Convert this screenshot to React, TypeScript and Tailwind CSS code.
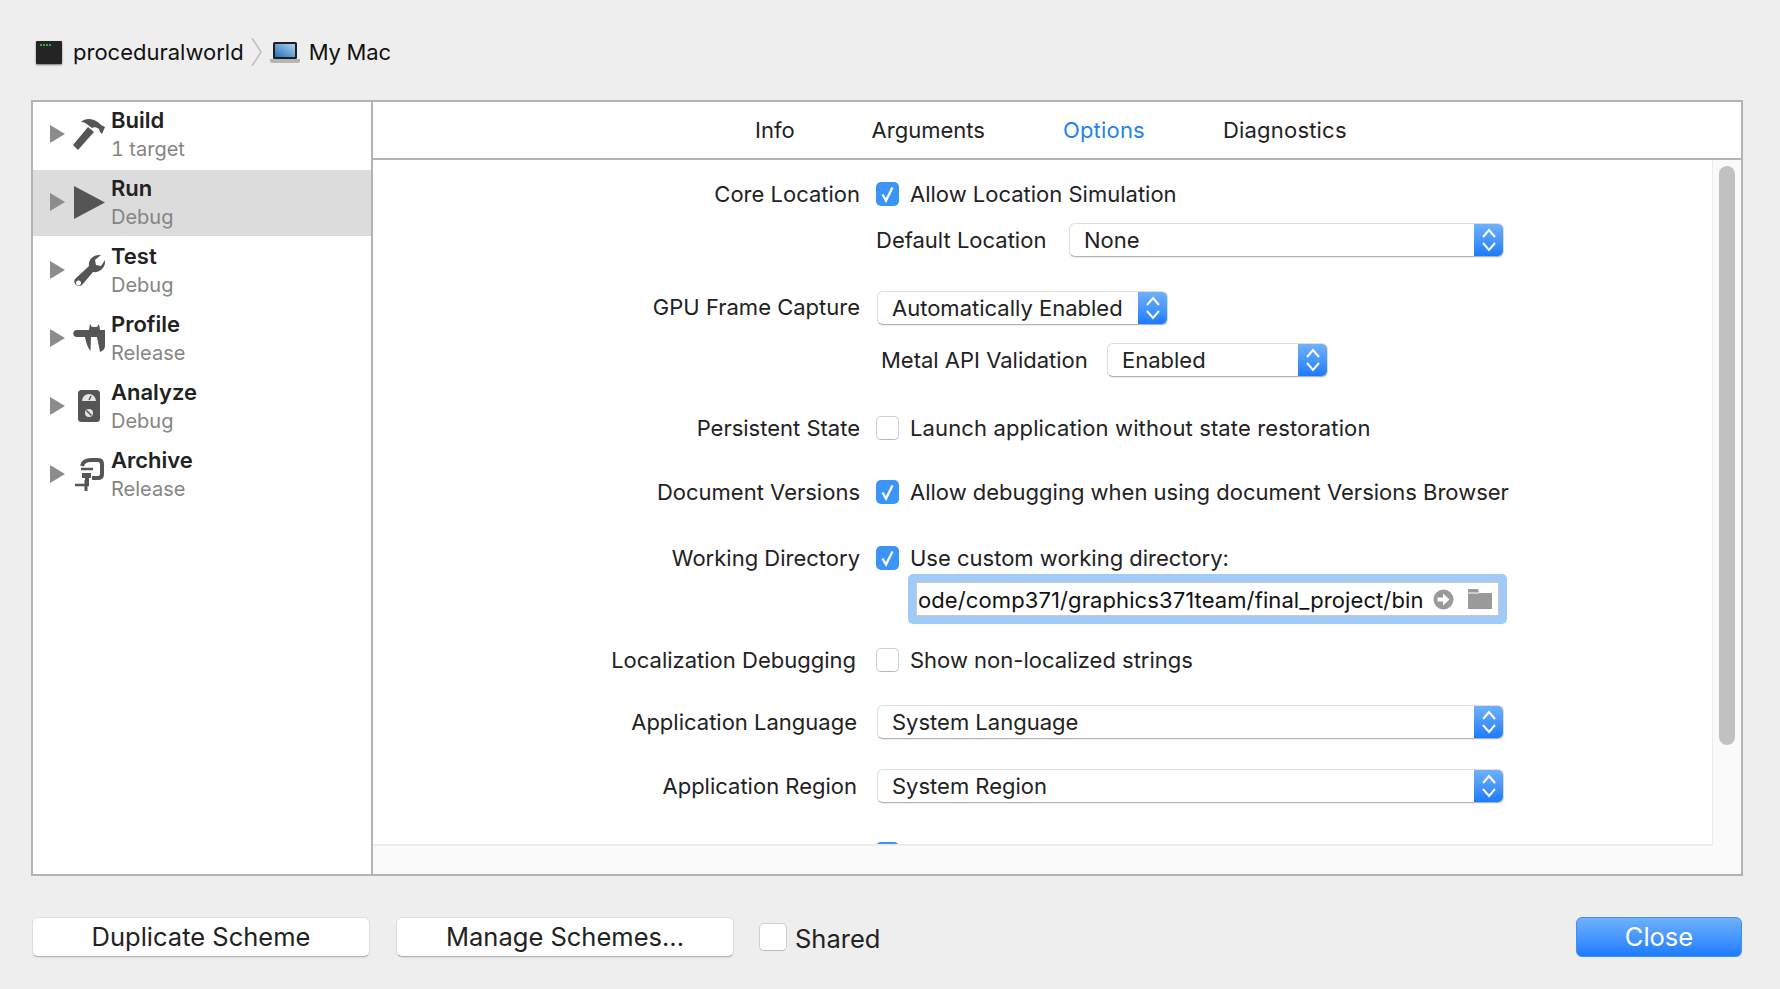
const font = { fontFamily: 'Inter, "Liberation Sans", sans-serif' }

const Triangle = () => (
  <svg width="15" height="18" viewBox="0 0 15 18" className="shrink-0">
    <path d="M0 0 L15 9 L0 18 Z" fill="#8c8c8c" />
  </svg>
)

const HammerIcon = () => (
  <svg width="32" height="32" viewBox="0 0 32 32" fill="#555555">
    <path d="M0 27 L15 9 L21 14 L5 32 Z" />
    <path d="M8 4 C12 0 20 0 26 5 L28 7 L32 9 L29 16 L27 14 L26 11 C23 9 21 9 19 10 L15 7 C13 5 11 4 8 4 Z" />
  </svg>
)

const PlayIcon = () => (
  <svg width="31" height="33" viewBox="0 0 31 33" fill="#555555">
    <path d="M0 0 L31 16.5 L0 33 Z" />
  </svg>
)

const WrenchIcon = () => (
  <svg width="31" height="33" viewBox="0 0 31 33">
    <path
      fillRule="evenodd"
      fill="#555555"
      d="M1 25 L15 12 C14 6 19 0 27 1 L21 6 L22 11 L27 12 L31 6 C32 14 25 19 19 18 L8 31 C5 34 -2 30 1 25 Z M4.5 26.5 A2.5 2.5 0 1 0 4.6 26.5 Z"
    />
  </svg>
)

const CaliperIcon = () => (
  <svg width="32" height="28" viewBox="0 0 32 28" fill="#555555">
    <path d="M4 6 H32 V13 H4 C-1 13 -1 6 4 6 Z" />
    <path d="M12 13 H18 L17.5 27 C15 24 13 19 12 13 Z" />
    <path d="M24 13 H32 V22 C32 25 30 27 27 28 C26 23 25 18 24 13 Z" />
    <path d="M16 6 L17 0 L19 3 H24 L26 0 L27 6 Z" />
  </svg>
)

const MeterIcon = () => (
  <svg width="22" height="32" viewBox="0 0 22 32">
    <rect width="22" height="32" rx="3.5" fill="#555555" />
    <path d="M4 11 A7 7 0 0 1 18 11 Z" fill="#e4e4e4" />
    <path d="M11 10 L13 6" stroke="#555555" strokeWidth="1.5" />
    <circle cx="11" cy="23" r="4" fill="#e4e4e4" />
    <path d="M8.5 20.5 L13.5 25.5" stroke="#555555" strokeWidth="1.5" />
  </svg>
)

const ClampIcon = () => (
  <svg width="29" height="33" viewBox="0 0 29 33" fill="none">
    <path d="M7 8 C8 3 12 2 16 2 H23 C26 2 27 4 27 6 V16 C27 19 25 20 23 20 H17" stroke="#555555" strokeWidth="4" />
    <path d="M6 11 H18" stroke="#555555" strokeWidth="2.5" />
    <path d="M7 15 H16 V20 H14 V26 H10 V20 H7 Z" fill="#555555" />
    <path d="M0 27 H14" stroke="#555555" strokeWidth="2.5" />
    <path d="M11 22 V33" stroke="#555555" strokeWidth="3" />
  </svg>
)

const sidebarItems = [
  { name: 'Build', sub: '1 target', icon: <HammerIcon /> },
  { name: 'Run', sub: 'Debug', icon: <PlayIcon />, selected: true },
  { name: 'Test', sub: 'Debug', icon: <WrenchIcon /> },
  { name: 'Profile', sub: 'Release', icon: <CaliperIcon /> },
  { name: 'Analyze', sub: 'Debug', icon: <MeterIcon /> },
  { name: 'Archive', sub: 'Release', icon: <ClampIcon /> },
]

const Checkbox = ({ checked }: { checked?: boolean }) =>
  checked ? (
    <span className="w-[23px] h-[24px] shrink-0 rounded-[5px] bg-[#3b94f7] flex items-center justify-center">
      <svg width="17" height="18" viewBox="0 0 17 18" fill="none">
        <path d="M3.5 9.5 L7 15.5 L13.5 2.5" stroke="white" strokeWidth="2.3" />
      </svg>
    </span>
  ) : (
    <span className="w-[23px] h-[24px] shrink-0 rounded-[5px] bg-white border border-[#cfcfcf] border-b-[#b9b9b9]" />
  )

const Select = ({ value, className }: { value: string; className: string }) => (
  <div className={`h-[34px] flex rounded-[6px] bg-white border border-[#dedede] border-b-[#b4b4b4] shadow-[0_1px_1px_rgba(0,0,0,0.08)] overflow-hidden ${className}`}>
    <span className="flex-1 pl-[14px] leading-[32px] text-[22px] text-[#222222]">{value}</span>
    <span className="w-[29px] bg-gradient-to-b from-[#6eb1fb] to-[#1a7bfe] flex items-center justify-center">
      <svg width="16" height="26" viewBox="0 0 16 26" fill="none" stroke="white" strokeWidth="2">
        <path d="M2 10 L8 3 L14 10" />
        <path d="M2 16 L8 23 L14 16" />
      </svg>
    </span>
  </div>
)

const Label = ({ text, className = 'w-[487px]' }: { text: string; className?: string }) => (
  <span className={`text-right text-[22px] text-[#222222] shrink-0 ${className}`}>{text}</span>
)

const CheckRow = ({ label, text, checked, labelClass, textClass = '', className }: { label: string; text: string; checked?: boolean; labelClass?: string; textClass?: string; className: string }) => (
  <div className={`flex items-center h-[34px] ${className}`}>
    <Label text={label} className={labelClass} />
    <span className="ml-[16px] flex items-center gap-[11px]">
      <Checkbox checked={checked} />
      <span className={`text-[22px] text-[#222222] whitespace-nowrap ${textClass}`}>{text}</span>
    </span>
  </div>
)

const PushButton = ({ label, className }: { label: string; className: string }) => (
  <button className={`h-[40px] rounded-[6px] bg-white border border-[#dedede] border-b-[#b4b4b4] shadow-[0_1px_1px_rgba(0,0,0,0.08)] text-[25.5px] text-[#222222] ${className}`}>
    {label}
  </button>
)

const App = () => {
  return (
    <div style={font} className="w-[1780px] h-[989px] bg-[#eeeeee] pl-[31px] overflow-hidden">
      {/* Scheme breadcrumb */}
      <div className="h-[100px] flex items-start pt-[38px]">
        <span className="ml-[5px] w-[26px] h-[23px] mt-[3px] rounded-[1px] bg-[#242424] shadow-[0_1px_2px_rgba(0,0,0,0.5)] flex items-start pl-[4px] pt-[3px] gap-[1px]">
          <span className="w-[2px] h-[2px] bg-[#38a83c]" />
          <span className="w-[2px] h-[2px] bg-[#38a83c]" />
          <span className="w-[2px] h-[2px] bg-[#38a83c]" />
          <span className="w-[2px] h-[2px] bg-[#38a83c]" />
        </span>
        <span className="ml-[11px] text-[22px] leading-[28px] text-[#111111]">proceduralworld</span>
        <svg width="11" height="28" viewBox="0 0 11 28" fill="none" className="ml-[7px]">
          <path d="M1 0 L10 14 L1 28" stroke="#bdbdbd" strokeWidth="1.5" />
        </svg>
        <svg width="30" height="21" viewBox="0 0 30 21" className="ml-[8px] mt-[4px]">
          <defs>
            <linearGradient id="screen" x1="0" y1="1" x2="1" y2="0">
              <stop offset="0" stopColor="#2a6fb8" />
              <stop offset="1" stopColor="#a9d3f2" />
            </linearGradient>
          </defs>
          <rect x="3" y="0" width="24" height="17" rx="1.5" fill="#1f1f1f" />
          <rect x="5" y="2" width="20" height="13" fill="url(#screen)" />
          <path d="M0 17 H30 V19 Q30 21 28 21 H2 Q0 21 0 19 Z" fill="#b5b5b5" />
        </svg>
        <span className="ml-[9px] text-[22px] tracking-[-0.2px] leading-[28px] text-[#111111]">My Mac</span>
      </div>

      <div className="w-[1712px] h-[776px] border-2 border-[#b3b3b3] bg-white flex">
        {/* Scheme actions */}
        <div className="w-[340px] h-full border-r-2 border-[#b3b3b3] shrink-0">
          {sidebarItems.map((item) => (
            <div key={item.name} className={`h-[66px] mb-[2px] pb-[2px] flex items-center pl-[17px] ${item.selected ? 'bg-[#dcdcdc]' : ''}`}>
              <Triangle />
              <span className="w-[32px] ml-[8px] flex items-center justify-center">{item.icon}</span>
              <div className="ml-[6px]">
                <div className="text-[22px] leading-[30px] font-semibold text-[#222222]">{item.name}</div>
                <div className="text-[20px] leading-[28px] text-[#858585] tabular-nums">{item.sub}</div>
              </div>
            </div>
          ))}
        </div>

        <div className="flex-1 flex flex-col min-w-0">
          <div className="h-[58px] border-b-2 border-[#b3b3b3] flex items-center pl-[382px] gap-[77px] text-[22px] text-[#222222] shrink-0">
            <span>Info</span>
            <span>Arguments</span>
            <span className="ml-[1px] tracking-[0.2px] text-[#1f82f0]">Options</span>
            <span className="ml-[1px] tracking-[0.2px]">Diagnostics</span>
          </div>

          <div className="flex-1 flex flex-col bg-[#fafafa] min-h-0">
            <div className="h-[686px] flex shrink-0">
              <div className="w-[1340px] bg-white border-r border-b-2 border-[#ececec] overflow-hidden">
                <CheckRow label="Core Location" text="Allow Location Simulation" checked className="mt-[17px]" />

                <div className="flex items-center h-[34px] mt-[12px] pl-[503px]">
                  <span className="text-[22px] text-[#222222] w-[193px]">Default Location</span>
                  <Select value="None" className="w-[435px]" />
                </div>

                <div className="flex items-center h-[34px] mt-[34px]">
                  <Label text="GPU Frame Capture" className="w-[487px] -mt-[2px]" />
                  <Select value="Automatically Enabled" className="ml-[17px] w-[291px]" />
                </div>

                <div className="flex items-center h-[34px] mt-[18px] pl-[508px]">
                  <span className="text-[22px] text-[#222222] w-[226px]">Metal API Validation</span>
                  <Select value="Enabled" className="w-[221px]" />
                </div>

                <CheckRow label="Persistent State" text="Launch application without state restoration" textClass="tracking-[0.13px]" className="mt-[34px]" />
                <CheckRow label="Document Versions" text="Allow debugging when using document Versions Browser" className="mt-[30px]" checked />
                <CheckRow label="Working Directory" text="Use custom working directory:" checked className="mt-[32px]" />

                <div className="-mt-px ml-[535px] w-[599px] h-[50px] rounded-[5px] bg-[#a0cbf9] p-[8px]">
                  <div className="h-full bg-white border border-[#c9c9c9] flex items-center pl-[1px] pr-[6px]">
                    <span className="text-[22px] leading-[30px] pt-[1px] tracking-[0.1px] text-[#111111] whitespace-nowrap">ode/comp371/graphics371team/final_project/bin</span>
                    <svg width="21" height="21" viewBox="0 0 21 21" className="ml-[10px] shrink-0">
                      <circle cx="10.5" cy="10.5" r="10" fill="#9a9a9a" />
                      <path d="M4.5 8.5 H10 V4.5 L16.5 10.5 L10 16.5 V12.5 H4.5 Z" fill="white" />
                    </svg>
                    <svg width="24" height="20" viewBox="0 0 24 20" className="ml-auto shrink-0">
                      <path d="M0 0 H10 L11 4 H24 V20 H0 Z" fill="#9a9a9a" />
                      <path d="M0 4 H11" stroke="white" strokeWidth="1" />
                    </svg>
                  </div>
                </div>

                <CheckRow label="Localization Debugging" text="Show non-localized strings" labelClass="w-[483px] mr-[4px]" className="mt-[19px]" />

                <div className="flex items-center h-[34px] mt-[28px]">
                  <Label text="Application Language" className="w-[484px] mr-[3px]" />
                  <Select value="System Language" className="ml-[17px] w-[627px]" />
                </div>
                <div className="flex items-center h-[34px] mt-[30px]">
                  <Label text="Application Region" className="w-[484px] mr-[3px]" />
                  <Select value="System Region" className="ml-[17px] w-[627px]" />
                </div>

                {/* next row, cut off by the scroll view */}
                <div className="mt-[39px] ml-[503px]">
                  <Checkbox checked />
                </div>
              </div>
              <div className="flex-1 pl-[6px] pt-[6px]">
                <div className="w-[16px] h-[579px] rounded-full bg-[#c1c1c1]" />
              </div>
            </div>
          </div>
        </div>
      </div>

      <div className="mt-[41px] h-[40px] flex items-center pr-[38px]">
        <PushButton label="Duplicate Scheme" className="ml-[1px] w-[338px]" />
        <PushButton label="Manage Schemes..." className="ml-[26px] w-[338px]" />
        <span className="ml-[25px]">
          <span className="block w-[28px] h-[28px] rounded-[5px] bg-white border border-[#cfcfcf] border-b-[#b9b9b9]" />
        </span>
        <span className="ml-[8px] mt-[4px] text-[25.5px] text-[#222222]">Shared</span>
        <button className="ml-auto w-[166px] h-[40px] rounded-[6px] bg-gradient-to-b from-[#6eb1fb] to-[#1a7bfe] border border-[#3d8ff5] text-[25.5px] text-white">
          Close
        </button>
      </div>
    </div>
  )
}

export default App
